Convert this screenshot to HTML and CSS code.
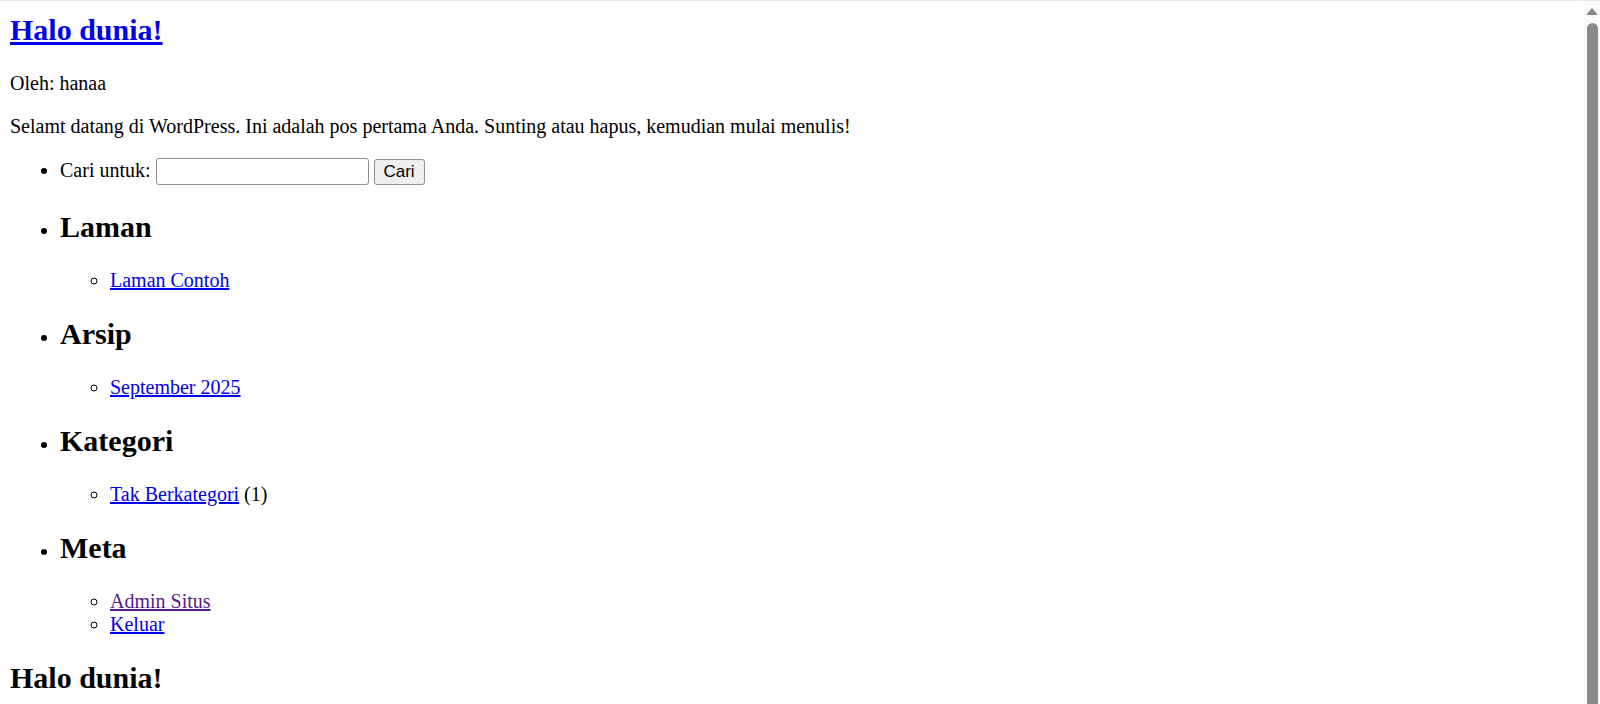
FILE: index.html
```html
<!DOCTYPE html>
<html lang="id">
<head>
<meta charset="utf-8">
<title>Halo dunia!</title>
<link rel="stylesheet" href="styles.css">
</head>
<body>
<div class="topline"></div>
<div class="scrollbar" aria-hidden="true">
  <div class="scroll-arrow"></div>
  <div class="scroll-thumb"></div>
</div>
<div class="post">
  <h2 class="post-title"><a href="#">Halo dunia!</a></h2>
  <p>Oleh: hanaa</p>
  <p>Selamt datang di WordPress. Ini adalah pos pertama Anda. Sunting atau hapus, kemudian mulai menulis!</p>
</div>
<ul class="sidebar">
  <li>
    <form class="search" action="#">
      <label>Cari untuk:</label>
      <input type="text" class="search-input">
      <button type="button" class="search-btn">Cari</button>
    </form>
  </li>
  <li>
    <h2>Laman</h2>
    <ul class="sub"><li><a href="#">Laman Contoh</a></li></ul>
  </li>
  <li>
    <h2>Arsip</h2>
    <ul class="sub"><li><a href="#">September 2025</a></li></ul>
  </li>
  <li>
    <h2>Kategori</h2>
    <ul class="sub"><li><a href="#">Tak Berkategori</a> (1)</li></ul>
  </li>
  <li>
    <h2>Meta</h2>
    <ul class="sub">
      <li><a href="#" class="visited">Admin Situs</a></li>
      <li><a href="#">Keluar</a></li>
    </ul>
  </li>
</ul>
<h2>Halo dunia!</h2>
<p>&nbsp;</p>
</body>
</html>
```

FILE: styles.css
```css
html {
  background: #ffffff;
}
body {
  margin: 10px;
  padding-top: 3px;
  font-family: "Liberation Serif", "Times New Roman", serif;
  font-size: 20px;
  color: #000000;
}
.topline {
  position: fixed;
  top: 0;
  left: 0;
  right: 0;
  height: 1px;
  background: #f3e4e4;
}
.scrollbar {
  position: fixed;
  top: 1px;
  right: 0;
  bottom: 0;
  width: 17px;
  background: #fbfbfb;
  display: flex;
  flex-direction: column;
  align-items: center;
}
.scroll-arrow {
  margin-top: 7px;
  margin-left: 1px;
  width: 0;
  height: 0;
  border-left: 6px solid transparent;
  border-right: 6px solid transparent;
  border-bottom: 7px solid #8a8a8a;
}
.scroll-thumb {
  margin-top: 8px;
  margin-left: 1px;
  width: 11px;
  flex: 1;
  background: #8a8a8a;
  border-radius: 6px 6px 0 0;
}
a {
  color: #0000ee;
}
a.visited {
  color: #551a8b;
}
h2 {
  font-size: 30px;
  margin: 25px 0;
}
.post-title {
  margin-top: 0;
}
p {
  margin: 20px 0;
}
.sidebar {
  margin: 20px 0;
  padding-left: 50px;
  list-style: disc;
}
.sub {
  margin: 20px 0;
  padding-left: 50px;
  list-style: circle;
}
.search {
  margin: 0;
}
.search-input {
  width: 213px;
  height: 27px;
  box-sizing: border-box;
  border: 1px solid #8f8f8f;
  border-radius: 3px;
  padding: 1px 3px;
  font-size: 16.7px;
  vertical-align: baseline;
}
.search-btn {
  width: 51px;
  height: 26px;
  box-sizing: border-box;
  font-family: "Liberation Sans", Arial, sans-serif;
  font-size: 17px;
  padding: 0;
  background: #efefef;
  border: 1px solid #8f8f8f;
  border-radius: 3px;
  color: #000;
}
```
